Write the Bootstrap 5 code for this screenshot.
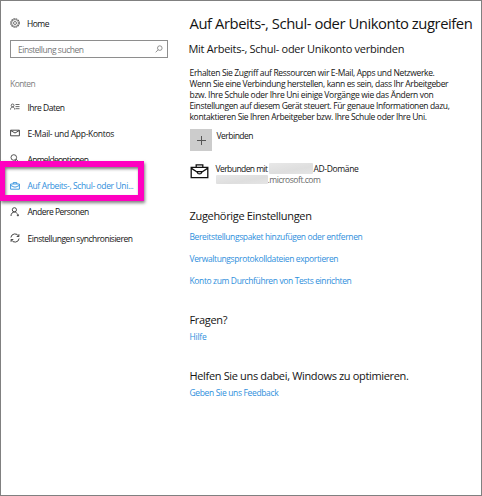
<!DOCTYPE html>
<html lang="de">
<head>
<meta charset="utf-8">
<meta name="viewport" content="width=device-width, initial-scale=1">
<title>Einstellungen – Konten</title>
<link href="https://cdn.jsdelivr.net/npm/bootstrap@5.3.0/dist/css/bootstrap.min.css" rel="stylesheet">
<style>
body{font-family:"Open Sans","Noto Sans",sans-serif;font-size:8.5px;line-height:11px;color:#141414;background:#fff;letter-spacing:-.36px}
.window{height:496px;border:1px solid #808080;background:#fff}
.window a{text-decoration:none;color:#2f8fdc}
.sidebar{width:178px;padding:11px 10px 0 9px}
.sidebar svg{flex:none}
.home{height:22px;gap:7px}
.search{height:18px;width:158px;margin-top:6px;padding:0 4px 0 7px;border:1px solid #8e8e8e;color:#777}
.group-title{height:20px;margin-top:16px;color:#808080;line-height:20px}
.entry{height:26.2px;gap:7.5px}
.side-list .entry span{white-space:nowrap}
.window .current{color:#2f8fdc}
.content{padding:10px 0 0 10.5px;flex:1;white-space:nowrap}
.title{font-size:14.8px;line-height:24px;letter-spacing:-.44px;margin:0}
.sub{font-size:11px;line-height:16px;letter-spacing:-.32px;margin:0}
.first-sub{letter-spacing:-.28px;margin-top:6px;margin-left:-1px}
.intro{margin:10px 0 0;line-height:11px}
.intro span{display:block}
.tile{width:22px;height:22px;background:#ccc}
.connect{margin-top:7px;gap:5px}
.connect>span{padding-top:1px}
.account{margin-top:12px;gap:7px}
.muted{color:#686868}
.redact{display:inline-block;height:11px;background:linear-gradient(170deg,#e8e8e8,#dedede 60%,#e5e5e5);border-radius:1px;filter:blur(.4px)}
.redact-name{width:44px;margin-left:2px}
.redact-host{width:52px;height:9px}
.related{margin-top:23px}
.links{margin-top:7px;gap:11px}
.questions{margin-top:26px}
.improve{margin-top:26px}
.sub+.single{margin-top:3px}
.marker{left:0;top:161px;width:144px;height:40px;border:solid #ff00c0;border-width:6px 6px 6px 5px;box-shadow:1px 2px 3px rgba(0,0,0,.5),inset 1px 2px 3px rgba(0,0,0,.5);pointer-events:none}
.k24{letter-spacing:-.24px}.k30{letter-spacing:-.3px}.k32{letter-spacing:-.319px}.k34{letter-spacing:-.344px}.k37{letter-spacing:-.373px}.k38{letter-spacing:-.38px}.k45{letter-spacing:-.45px}.k47{letter-spacing:-.472px}.k50{letter-spacing:-.505px}.k57{letter-spacing:-.57px}.k68{letter-spacing:-.7px}
</style>
</head>
<body>
<div class="window d-flex position-relative overflow-hidden">
  <nav class="sidebar flex-shrink-0">
    <div class="home d-flex align-items-center k50">
      <svg width="10" height="10" viewBox="0 0 10 10" fill="none" stroke="#555"><circle cx="5" cy="5" r="4.2" stroke-width="1.1" stroke-dasharray="1.6 .6"/><circle cx="5" cy="5" r="3.4" stroke-width=".6"/><circle cx="5" cy="5" r="1.5" stroke-width=".8"/></svg>
      <span>Home</span>
    </div>
    <div class="search d-flex align-items-center justify-content-between k47">
      <span>Einstellung suchen</span>
      <svg width="8" height="8" viewBox="0 0 8 8" fill="none" stroke="#777" stroke-width=".8"><circle cx="4.8" cy="3.1" r="2.3"/><path d="M3.1 4.8.7 7.3"/></svg>
    </div>
    <div class="group-title k57">Konten</div>
    <div class="side-list">
      <div class="entry d-flex align-items-center k50">
        <svg width="10" height="10" viewBox="0 0 10 10" fill="none" stroke="#444" stroke-width=".8"><circle cx="2.6" cy="3.4" r="1.4"/><path d="M.5 7.6C.5 4.2 4.7 4.2 4.7 7.6M5.5 2.5H9.5M5.5 4.6H9.5M5.5 6.7H9.5"/></svg>
        <span>Ihre Daten</span>
      </div>
      <div class="entry d-flex align-items-center k30">
        <svg width="10" height="10" viewBox="0 0 10 10" fill="none" stroke="#333" stroke-width=".9"><path d="M.6 2.2H9.4V7.8H.6ZM.8 2.6 5 5 9.2 2.6"/></svg>
        <span>E-Mail- und App-Kontos</span>
      </div>
      <div class="entry d-flex align-items-center k68">
        <svg width="10" height="10" viewBox="0 0 10 10" fill="none" stroke="#444" stroke-width=".9"><circle cx="3.8" cy="3.5" r="2.8"/><path d="M4.8 6 8.4 9.4V7.5L6 5.2"/></svg>
        <span>Anmeldeoptionen</span>
      </div>
      <div class="entry current d-flex align-items-center k38">
        <svg width="10" height="10" viewBox="0 0 10 10" fill="none" stroke="currentColor" stroke-width=".9"><path d="M.6 3H9.4V8.2H.6ZM3.2 3V1.6H6.8V3M.7 4.4 4 6H6L9.3 4.4"/></svg>
        <span>Auf Arbeits-, Schul- oder Uni...</span>
      </div>
      <div class="entry d-flex align-items-center k50">
        <svg width="10" height="10" viewBox="0 0 10 10" fill="none" stroke="#333" stroke-width=".9"><circle cx="4.4" cy="2.8" r="2.1"/><path d="M1 9C1 6.5 2.5 5 4.4 5 5.7 5 6.7 5.7 7.2 6.6M6.8 8.2H9M7.9 7.1V9.3"/></svg>
        <span>Andere Personen</span>
      </div>
      <div class="entry d-flex align-items-center k47">
        <svg width="10" height="10" viewBox="0 0 10 10" fill="none" stroke="#333" stroke-width=".9"><path d="M.9 4.5A4.1 4.1 0 0 1 8.7 3.3M9.1 5.5A4.1 4.1 0 0 1 1.3 6.7M8.9 1.2V3.5H6.7M1.1 8.8V6.5H3.3"/></svg>
        <span>Einstellungen synchronisieren</span>
      </div>
    </div>
  </nav>
  <main class="content">
    <h1 class="title fw-normal">Auf Arbeits-, Schul- oder Unikonto zugreifen</h1>
    <h2 class="sub first-sub fw-normal">Mit Arbeits-, Schul- oder Unikonto verbinden</h2>
    <p class="intro">
      <span class="k34">Erhalten Sie Zugriff auf Ressourcen wir E-Mail, Apps und Netzwerke.</span>
      <span>Wenn Sie eine Verbindung herstellen, kann es sein, dass Ihr Arbeitgeber</span>
      <span class="k32">bzw. Ihre Schule oder Ihre Uni einige Vorgänge wie das Ändern von</span>
      <span class="k37">Einstellungen auf diesem Gerät steuert. Für genaue Informationen dazu,</span>
      <span class="k34">kontaktieren Sie Ihren Arbeitgeber bzw. Ihre Schule oder Ihre Uni.</span>
    </p>
    <div class="connect d-flex">
      <div class="tile d-flex align-items-center justify-content-center">
        <svg width="10" height="10" viewBox="0 0 10 10" stroke="#555" stroke-width="1"><path d="M5.5 1V10M1 5.5H10"/></svg>
      </div>
      <span class="k50">Verbinden</span>
    </div>
    <div class="account d-flex">
      <svg width="19" height="16" viewBox="0 0 19 16" fill="none" stroke="#111" stroke-width="1.3"><path d="M1.2 4.3H17.8V14.6H1.2ZM6.2 4.3V1.8H12.8V4.3M1.5 5.4 7.4 9.3M17.5 5.4 11.6 9.3"/><path d="M7.5 8.6H11.5V9.4C11.5 11.4 7.5 11.4 7.5 9.4Z"/></svg>
      <div>
        <div class="d-flex"><span class="k57">Verbunden mit</span><span class="redact redact-name"></span><span class="k34">AD-Domäne</span></div>
        <div class="d-flex align-items-center muted"><span class="redact redact-host"></span><span class="k45">.microsoft.com</span></div>
      </div>
    </div>
    <section class="related">
      <h2 class="sub fw-normal">Zugehörige Einstellungen</h2>
      <div class="links d-flex flex-column align-items-start">
        <a href="#" class="k37">Bereitstellungspaket hinzufügen oder entfernen</a>
        <a href="#" class="k37">Verwaltungsprotokolldateien exportieren</a>
        <a href="#" class="k38">Konto zum Durchführen von Tests einrichten</a>
      </div>
    </section>
    <section class="questions">
      <h2 class="sub fw-normal">Fragen?</h2>
      <a href="#" class="single d-block k24">Hilfe</a>
    </section>
    <section class="improve">
      <h2 class="sub fw-normal k34">Helfen Sie uns dabei, Windows zu optimieren.</h2>
      <a href="#" class="single d-block k34">Geben Sie uns Feedback</a>
    </section>
  </main>
</div>
<div class="marker position-absolute"></div>
<script src="https://cdn.jsdelivr.net/npm/bootstrap@5.3.0/dist/js/bootstrap.bundle.min.js"></script>
</body>
</html>
